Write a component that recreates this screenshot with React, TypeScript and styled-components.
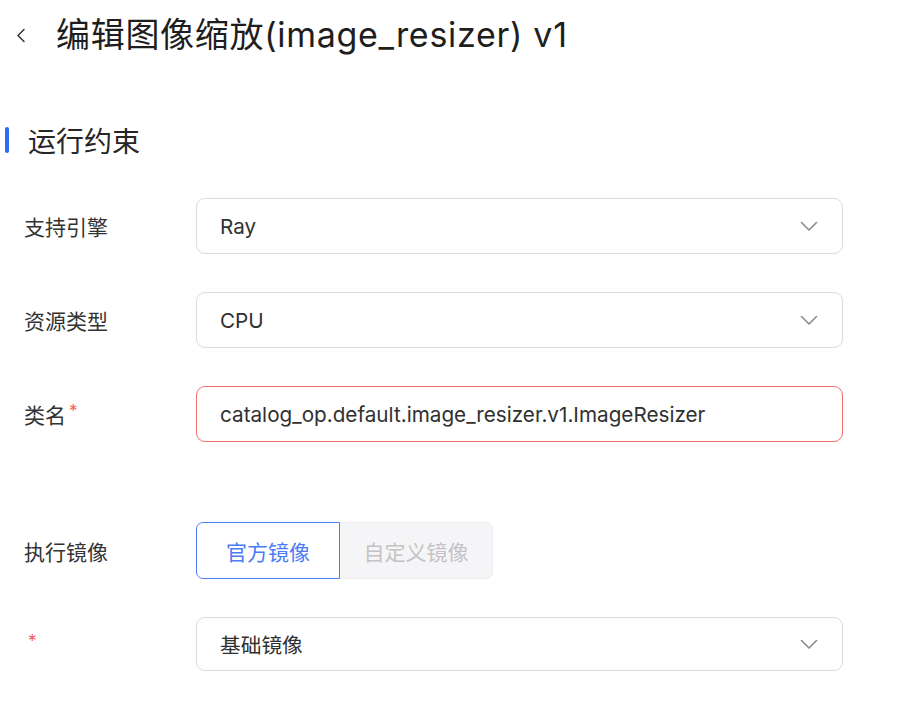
import styled, { createGlobalStyle } from "styled-components";

const GlobalStyle = createGlobalStyle`
  html, body {
    margin: 0;
    padding: 0;
    background: #ffffff;
  }
  body {
    font-family: Inter, "Noto Sans CJK SC", sans-serif;
    color: #262626;
  }
`;

const Page = styled.div`
  width: 898px;
  height: 702px;
  overflow: hidden;
  background: #fff;
`;

const Header = styled.div`
  height: 70px;
  display: flex;
  align-items: center;
  padding-left: 14px;
`;

const Back = styled.button`
  border: none;
  background: none;
  padding: 0;
  width: 14px;
  height: 18px;
  display: flex;
  align-items: center;
  justify-content: center;
  margin-right: 28px;
  color: #333;
`;

const Title = styled.h1`
  margin: 0;
  font-size: 34px;
  line-height: 1;
  font-weight: 400;
  color: #1e1e20;
  letter-spacing: 0.7px;
`;

const SectionTitle = styled.div`
  margin-top: 57px;
  height: 26px;
  display: flex;
  align-items: center;
  padding-left: 5px;
  gap: 19px;
  font-size: 28px;
  color: #262626;
`;

const Bar = styled.span`
  width: 4px;
  height: 26px;
  border-radius: 2px;
  background: #2f6bf5;
`;

const Form = styled.div`
  margin-top: 45px;
  display: flex;
  flex-direction: column;
`;

const Row = styled.div<{ $gap?: number }>`
  display: flex;
  align-items: center;
  margin-bottom: ${(p) => p.$gap ?? 38}px;
`;

const Label = styled.div`
  width: 196px;
  padding-left: 24px;
  box-sizing: border-box;
  font-size: 21px;
  color: #333;
  display: flex;
  align-items: center;
`;

const Star = styled.span<{ $alone?: boolean }>`
  color: #f45b5b;
  font-size: 17px;
  line-height: 1;
  margin-left: ${(p) => (p.$alone ? 4 : 3)}px;
  position: relative;
  top: -3px;
`;

const Field = styled.div<{ $error?: boolean; $h?: number }>`
  width: 647px;
  height: ${(p) => p.$h ?? 56}px;
  box-sizing: border-box;
  border: 1.5px solid ${(p) => (p.$error ? "#f26f6f" : "#dcdce0")};
  border-radius: 9px;
  display: flex;
  align-items: center;
  justify-content: space-between;
  padding: 0 24px 0 23px;
  font-size: 20.7px;
  color: #303030;
`;

const Segmented = styled.div`
  display: flex;
  height: 57px;
`;

const Segment = styled.div<{ $active?: boolean; $w: number }>`
  width: ${(p) => p.$w}px;
  box-sizing: border-box;
  display: flex;
  align-items: center;
  justify-content: center;
  font-size: 21px;
  color: ${(p) => (p.$active ? "#4b7bf5" : "#c3c3c6")};
  background: ${(p) => (p.$active ? "#fff" : "#f5f5f7")};
  border: ${(p) => (p.$active ? "1.5px solid #4d7ef6" : "1px solid #ececef")};
  border-left-width: ${(p) => (p.$active ? "1.5px" : "0")};
  border-radius: ${(p) => (p.$active ? "7px 0 0 7px" : "0 7px 7px 0")};
`;

const Chevron = () => (
  <svg width="18" height="10" viewBox="0 0 18 10" fill="none">
    <path d="M1.5 1.5l7.5 7.5 7.5-7.5" stroke="#8a8a8e" strokeWidth="1.6" strokeLinecap="round" strokeLinejoin="round" />
  </svg>
);

const Select = ({ value, h }: { value: string; h?: number }) => (
  <Field $h={h}>
    <span>{value}</span>
    <Chevron />
  </Field>
);

export default function App() {
  return (
    <Page>
      <GlobalStyle />
      <Header>
        <Back aria-label="back">
          <svg width="10" height="15" viewBox="0 0 10 15" fill="none">
            <path d="M8 1.5L2 7.5l6 6" stroke="#333" strokeWidth="1.5" strokeLinecap="round" strokeLinejoin="round" />
          </svg>
        </Back>
        <Title>编辑图像缩放(image_resizer) v1</Title>
      </Header>

      <SectionTitle>
        <Bar />
        运行约束
      </SectionTitle>

      <Form>
        <Row>
          <Label>支持引擎</Label>
          <Select value="Ray" />
        </Row>
        <Row>
          <Label>资源类型</Label>
          <Select value="CPU" />
        </Row>
        <Row $gap={80}>
          <Label>
            类名<Star>*</Star>
          </Label>
          <Field $error>
            <span>catalog_op.default.image_resizer.v1.ImageResizer</span>
          </Field>
        </Row>
        <Row>
          <Label>执行镜像</Label>
          <Segmented>
            <Segment $active $w={144}>官方镜像</Segment>
            <Segment $w={153}>自定义镜像</Segment>
          </Segmented>
        </Row>
        <Row>
          <Label>
            <Star $alone>*</Star>
          </Label>
          <Select value="基础镜像" h={54} />
        </Row>
      </Form>
    </Page>
  );
}
